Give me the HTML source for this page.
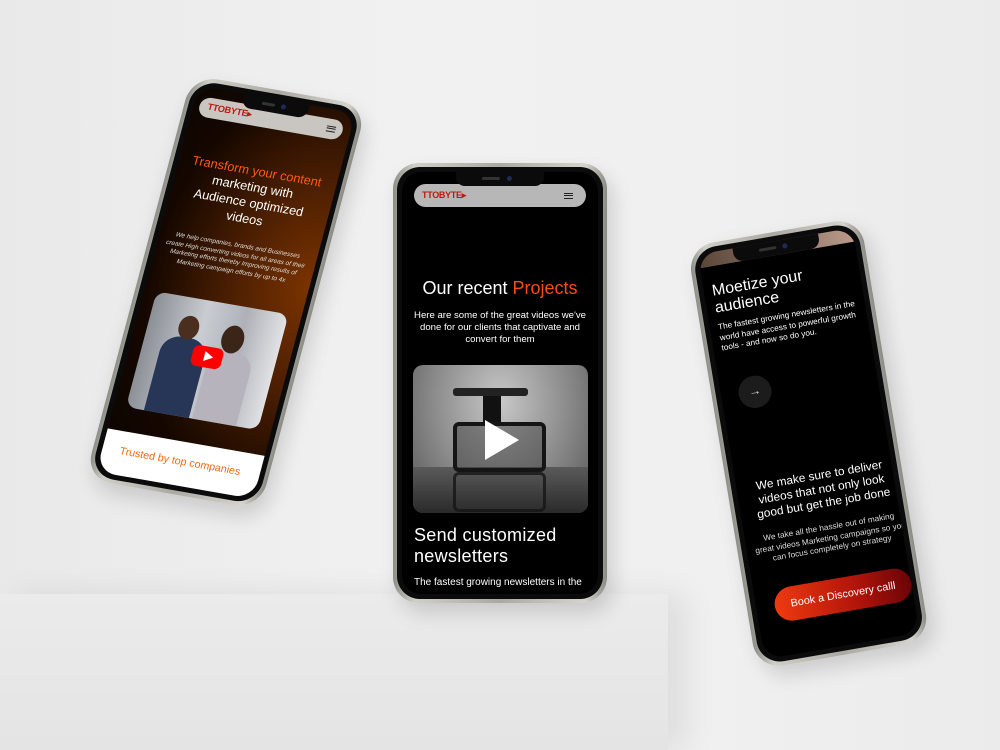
<!DOCTYPE html>
<html><head><meta charset="utf-8">
<style>
*{margin:0;padding:0;box-sizing:border-box}
body{width:1000px;height:750px;overflow:hidden;position:relative;font-family:"Liberation Sans",sans-serif;
background:linear-gradient(90deg,#e9e9e9 0%,#f1f1f1 40%,#f0f0f0 70%,#ebebeb 100%);}
.ped{position:absolute;left:0;top:594px;width:668px;height:156px;background:linear-gradient(180deg,#ebebeb,#e4e4e4);box-shadow:18px 0 30px rgba(0,0,0,.08)}
.phone{position:absolute;transform-origin:0 0;border-radius:26px;background:linear-gradient(90deg,#8e8e88,#cfcfc8 10%,#aaa9a2 50%,#d4d3cc 90%,#8a8a84);padding:4px;box-shadow:6px 10px 20px rgba(0,0,0,.15)}
.bez{width:100%;height:100%;background:#0b0b0b;border-radius:23px;padding:5px;position:relative}
.scr{width:100%;height:100%;border-radius:19px;overflow:hidden;position:relative;background:#000;color:#fff}
.notch{position:absolute;top:0;left:50%;transform:translateX(-50%);width:42%;height:14px;background:#0b0b0b;border-radius:0 0 9px 9px;z-index:5}
.notch:after{content:"";position:absolute;left:58%;top:4px;width:5px;height:5px;border-radius:50%;background:#1d2a55}
.notch:before{content:"";position:absolute;left:30%;top:5px;width:20%;height:3px;border-radius:2px;background:#333}
.abs{position:absolute}
.c{text-align:center}
.nav{position:absolute;border-radius:12px;}
.logo{position:absolute;color:#c0170f;font-weight:bold;letter-spacing:-.3px}
.ham{position:absolute;width:9px;height:6px;border-top:1.5px solid #222;border-bottom:1.5px solid #222}
.ham:after{content:"";position:absolute;left:0;right:0;top:1.2px;border-top:1.5px solid #222}
</style></head><body>
<div class="ped"></div>

<!-- LEFT PHONE -->
<div class="phone" style="left:192px;top:75px;width:175px;height:412px;transform:matrix(1,0.175,-0.26,0.98,0,0)">
<div class="bez"><div class="scr" style="background:radial-gradient(ellipse at 100% 45%,#7a3300 0%,#4a1e02 35%,#150700 70%,#0a0400 100%)">
<div class="notch"></div>
<div class="nav" style="left:6px;top:10px;width:143px;height:20px;background:#c9c5c0"></div>
<div class="logo" style="left:14px;top:14px;font-size:9px">TTOBYTE▸</div>
<div class="ham" style="left:133px;top:17px"></div>
<div class="abs c" style="left:0;width:155px;top:66px;font-size:12.5px;line-height:16px">
<span style="color:#ff5a12">Transform your content</span><br>marketing with<br>Audience optimized<br>videos</div>
<div class="abs c" style="left:8px;width:140px;top:146px;font-size:6.3px;line-height:8.5px;font-style:italic;color:#ddd">We help companies, brands and Businesses create High converting videos for all areas of their Marketing efforts thereby Improving results of Marketing campaign efforts by up to 4x</div>
<div class="abs" style="left:12px;top:208px;width:132px;height:118px;border-radius:10px;background:linear-gradient(90deg,#8b8f96,#c9cdd2 40%,#aeb1b7 70%,#e0e2e5);overflow:hidden">
<div class="abs" style="left:18px;top:40px;width:45px;height:80px;background:#273657;border-radius:18px 18px 0 0"></div>
<div class="abs" style="left:30px;top:18px;width:20px;height:24px;background:#4a2e1e;border-radius:50%"></div>
<div class="abs" style="left:66px;top:46px;width:44px;height:76px;background:#b6b3bd;border-radius:18px 18px 0 0"></div>
<div class="abs" style="left:74px;top:20px;width:22px;height:28px;background:#3b2418;border-radius:50%"></div>
<div class="abs" style="left:50px;top:45px;width:30px;height:21px;background:#f00;border-radius:6px"></div>
<div class="abs" style="left:62px;top:50px;width:0;height:0;border-left:9px solid #fff;border-top:5.5px solid transparent;border-bottom:5.5px solid transparent"></div>
</div>
<div class="abs" style="left:0;top:350px;width:165px;height:62px;background:#fff"></div>
<div class="abs c" style="left:0;width:155px;top:364px;font-size:10.5px;color:#f26a10">Trusted by top companies</div>
</div></div></div>

<!-- MIDDLE PHONE -->
<div class="phone" style="left:393px;top:163px;width:214px;height:440px">
<div class="bez"><div class="scr">
<div class="notch" style="width:45%"></div>
<div class="nav" style="left:12px;top:12px;width:172px;height:23px;background:#b7b7b7"></div>
<div class="logo" style="left:20px;top:18px;font-size:9px">TTOBYTE▸</div>
<div class="ham" style="left:162px;top:21px"></div>
<div class="abs c" style="left:0;width:196px;top:106px;font-size:18px">Our recent <span style="color:#ff4a12">Projects</span></div>
<div class="abs c" style="left:6px;width:184px;top:138px;font-size:9.6px;line-height:12px">Here are some of the great videos we've done for our clients that captivate and convert for them</div>
<div class="abs" style="left:11px;top:193px;width:175px;height:148px;border-radius:10px;background:radial-gradient(ellipse at 50% 25%,#c8c8c8,#8a8a8a 55%,#555 100%);overflow:hidden">
<div class="abs" style="left:0;top:102px;width:175px;height:46px;background:linear-gradient(#5a5a5a,#2a2a2a)"></div>
<div class="abs" style="left:40px;top:23px;width:75px;height:8px;background:#222;border-radius:3px"></div>
<div class="abs" style="left:70px;top:31px;width:18px;height:28px;background:#111"></div>
<div class="abs" style="left:40px;top:57px;width:93px;height:50px;border:4px solid #151515;border-radius:6px;background:rgba(40,40,40,.4)"></div>
<div class="abs" style="left:40px;top:107px;width:93px;height:40px;border:3px solid #151515;border-radius:6px;opacity:.8"></div>
<div class="abs" style="left:72px;top:55px;width:0;height:0;border-left:34px solid #fff;border-top:20px solid transparent;border-bottom:20px solid transparent"></div>
</div>
<div class="abs" style="left:12px;top:353px;font-size:18px;line-height:21px;letter-spacing:.3px">Send customized<br>newsletters</div>
<div class="abs" style="left:12px;top:405px;font-size:10px;white-space:nowrap">The fastest growing newsletters in the</div>
</div></div></div>

<!-- RIGHT PHONE -->
<div class="phone" style="left:687px;top:247px;width:170px;height:425px;transform:matrix(1.018,-0.176,0.165,0.995,0,0)">
<div class="bez"><div class="scr">
<div class="abs" style="left:0;top:0;width:160px;height:14px;background:linear-gradient(90deg,#5a4638,#8a7060 50%,#c0a090)"></div>
<div class="notch" style="width:55%"></div>
<div class="abs" style="left:8px;top:30px;font-size:15.5px;line-height:17px">Moetize your<br>audience</div>
<div class="abs" style="left:8px;top:70px;width:145px;font-size:8px;line-height:10.5px">The fastest growing newsletters in the world have access to powerful growth tools - and now so do you.</div>
<div class="abs" style="left:17px;top:128px;width:32px;height:32px;border-radius:50%;background:#1c1c1c;color:#ddd;font-size:12px;text-align:center;line-height:31px">→</div>
<div class="abs c" style="left:6px;width:150px;top:230px;font-size:11.5px;line-height:14px">We make sure to deliver videos that not only look good but get the job done</div>
<div class="abs c" style="left:8px;width:148px;top:284px;font-size:8px;line-height:10.5px;color:#ddd">We take all the hassle out of making great videos Marketing campaigns so you can focus completely on strategy</div>
<div class="abs c" style="left:18px;top:340px;width:134px;height:34px;border-radius:17px;background:linear-gradient(90deg,#ee3a10,#b0140a 60%,#6a0408);font-size:10.5px;line-height:34px">Book a Discovery calll</div>
</div></div></div>
</body></html>
